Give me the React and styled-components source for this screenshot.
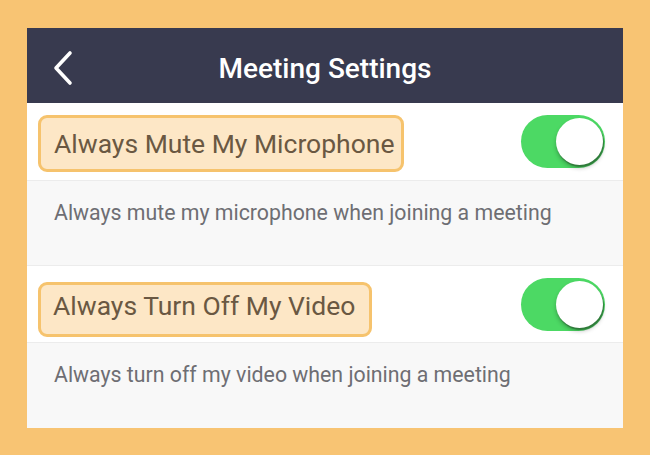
import React from "react";
import styled, { createGlobalStyle } from "styled-components";

const Global = createGlobalStyle`
  html, body { margin: 0; padding: 0; background: #f8c473; }
  body { font-family: Roboto, "Noto Sans", Arial, sans-serif; }
`;

const Frame = styled.div`
  width: 650px;
  height: 455px;
  box-sizing: border-box;
  padding: 28px 27px 27px 27px;
  background: #f8c473;
`;

const Panel = styled.div`
  width: 596px;
  height: 400px;
  background: #f8f8f8;
  display: flex;
  flex-direction: column;
  overflow: hidden;
`;

const Header = styled.div`
  height: 75px;
  flex: none;
  box-sizing: border-box;
  padding-top: 5px;
  background: #383a4f;
  display: grid;
  grid-template-columns: 1fr auto 1fr;
  align-items: center;
`;

const Back = styled.button`
  justify-self: start;
  margin-left: 24px;
  padding: 0;
  border: 0;
  background: none;
  display: flex;
  width: 24px;
  height: 36px;
`;

const Title = styled.h1`
  margin: 0;
  color: #ffffff;
  font-size: 28px;
  font-weight: 500;
  line-height: 33px;
`;

const Row = styled.div`
  height: ${(p) => p.$h}px;
  flex: none;
  background: #ffffff;
  border-bottom: 1px solid #ececec;
  display: flex;
  align-items: center;
  justify-content: space-between;
  padding: 0 18px 0 11px;
  box-sizing: border-box;
`;

const Label = styled.span`
  display: inline-block;
  margin-top: ${(p) => p.$shift}px;
  border: 3px solid #f6c36d;
  background: #fde7c6;
  border-radius: 9px;
  padding: ${(p) => p.$pad};
  color: #6a5842;
  font-size: 26.5px;
  line-height: 32px;
`;

const Desc = styled.div`
  height: ${(p) => p.$h}px;
  flex: none;
  box-sizing: border-box;
  padding: 19px 0 0 27px;
  color: #6e6e73;
  font-size: 21.3px;
  line-height: 25px;
  background: #f8f8f8;
  border-bottom: ${(p) => (p.$last ? "none" : "1px solid #ececec")};
`;

const Track = styled.div`
  width: 84px;
  height: 53px;
  border-radius: 27px;
  background: #4cd964;
  display: flex;
  align-items: center;
  justify-content: flex-end;
  padding-right: 2px;
  box-sizing: border-box;
`;

const Knob = styled.div`
  width: 47px;
  height: 47px;
  border-radius: 50%;
  background: #ffffff;
  box-shadow: 1px 2px 1px #2f7a3a, 0 3px 4px rgba(0, 0, 0, 0.25);
`;

function Toggle() {
  return (
    <Track>
      <Knob />
    </Track>
  );
}

export default function App() {
  return (
    <>
      <Global />
      <Frame>
        <Panel>
          <Header>
            <Back aria-label="Back">
              <svg width="24" height="36" viewBox="0 0 24 36">
                <path
                  d="M19 3 L5 18 L19 33"
                  fill="none"
                  stroke="#ffffff"
                  strokeWidth="3.6"
                  strokeLinecap="round"
                  strokeLinejoin="round"
                />
              </svg>
            </Back>
            <Title>Meeting Settings</Title>
            <span />
          </Header>
          <Row $h={78}>
            <Label $shift={3} $pad="10px 6px 9px 13px">
              Always Mute My Microphone
            </Label>
            <Toggle />
          </Row>
          <Desc $h={85}>Always mute my microphone when joining a meeting</Desc>
          <Row $h={77}>
            <Label $shift={10} $pad="5px 14px 12px 12px">
              Always Turn Off My Video
            </Label>
            <Toggle />
          </Row>
          <Desc $h={85} $last>
            Always turn off my video when joining a meeting
          </Desc>
        </Panel>
      </Frame>
    </>
  );
}
